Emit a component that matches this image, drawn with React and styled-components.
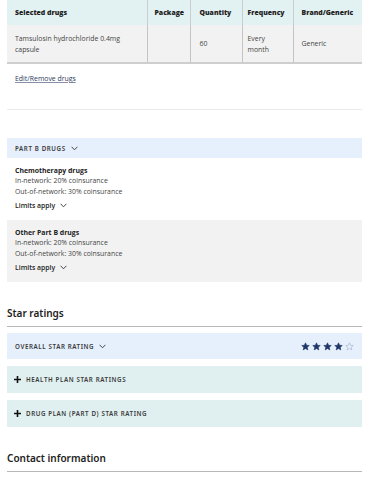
import React from 'react'
import styled, { createGlobalStyle } from 'styled-components'

const GlobalStyle = createGlobalStyle`
  body {
    margin: 0;
    background: #fff;
    font-family: "Open Sans", "Noto Sans", sans-serif;
    color: #222;
  }
`

const Page = styled.div`
  width: 370px;
  padding: 0 8px 0 7px;
  box-sizing: border-box;
`

const Table = styled.table`
  width: 355px;
  border-collapse: collapse;
  table-layout: fixed;
  border-bottom: 2px solid #cfcfcf;
`

const HeadCell = styled.th`
  background: #e2f1f1;
  height: 25px;
  padding: 0 0 0 ${p => p.$pad || 7}px;
  text-align: left;
  font-size: 6.9px;
  font-weight: 800;
  color: #222;
  border-left: ${p => (p.$first ? 'none' : '1px solid #c9cfcf')};
  box-sizing: border-box;
  white-space: nowrap;
`

const BodyCell = styled.td`
  background: #f2f2f2;
  height: 37px;
  padding: 0 4px 0 ${p => p.$pad || 7}px;
  font-size: 6.9px;
  line-height: 11px;
  color: #444;
  border-left: ${p => (p.$first ? 'none' : '1px solid #c4c4c4')};
  vertical-align: middle;
`

const EditLink = styled.a`
  display: block;
  margin: 10px 0 0 8px;
  font-size: 6.9px;
  line-height: 9px;
  color: #2d3a5a;
  text-decoration: underline;
  text-decoration-color: #8890a8;
`

const Divider = styled.div`
  height: 1px;
  background: #ececec;
  margin-top: 26px;
`

const Bar = styled.div`
  display: flex;
  align-items: center;
  justify-content: space-between;
  height: ${p => p.$h || 26}px;
  margin-top: ${p => p.$mt || 0}px;
  padding: 0 8px 0 ${p => p.$pl || 8}px;
  background: ${p => (p.$tone === 'teal' ? '#e0f0f0' : '#e6f0fd')};
`

const BarLabel = styled.span`
  display: flex;
  align-items: center;
  gap: 5px;
  font-family: "Noto Sans", sans-serif;
  font-size: 6.2px;
  font-weight: 600;
  letter-spacing: 0.6px;
  color: #3a3a3a;
  text-transform: uppercase;
`

const DrugBlock = styled.div`
  background: ${p => (p.$grey ? '#f2f2f2' : '#fff')};
  padding: 7px 8px 7px;
  height: 62px;
  box-sizing: border-box;
`

const DrugTitle = styled.div`
  font-size: 6.9px;
  font-weight: 700;
  color: #222;
  line-height: 11px;
`

const DrugLine = styled.div`
  font-size: 6.9px;
  color: #444;
  line-height: 10.5px;
`

const Limits = styled.div`
  display: flex;
  align-items: center;
  gap: 5px;
  margin-top: 4px;
  font-size: 6.9px;
  font-weight: 600;
  color: #222;
`

const Heading = styled.h2`
  margin: ${p => p.$mt}px 0 0;
  padding-bottom: 6px;
  border-bottom: 1px solid #b8b8b8;
  font-family: "Noto Sans", sans-serif;
  font-size: 10px;
  font-weight: 600;
  color: #222;
  line-height: 14px;
`

const Stars = styled.div`
  display: flex;
  gap: 2px;
`

const Chevron = () => (
  <svg width="7" height="5" viewBox="0 0 7 5">
    <path d="M0.6 0.8 L3.5 3.8 L6.4 0.8" fill="none" stroke="#333" strokeWidth="0.9" />
  </svg>
)

const Plus = () => (
  <svg width="7" height="7" viewBox="0 0 7 7">
    <path d="M3.5 0 V7 M0 3.5 H7" stroke="#111" strokeWidth="1.6" />
  </svg>
)

const Star = ({ filled }) => (
  <svg width="9" height="9" viewBox="0 0 24 24">
    <path
      d="M12 2.2l2.9 6.6 7.1.6-5.4 4.7 1.6 7-6.2-3.7-6.2 3.7 1.6-7L2 9.4l7.1-.6z"
      fill={filled ? '#1e3768' : 'none'}
      stroke={filled ? '#1e3768' : '#9fb0c8'}
      strokeWidth="1.6"
      strokeLinejoin="round"
    />
  </svg>
)

const drugs = [
  { title: 'Chemotherapy drugs', grey: false },
  { title: 'Other Part B drugs', grey: true },
]

export default function App() {
  return (
    <Page>
      <GlobalStyle />
      <Table>
        <colgroup>
          <col style={{ width: 140 }} />
          <col style={{ width: 43 }} />
          <col style={{ width: 52 }} />
          <col style={{ width: 51 }} />
          <col style={{ width: 69 }} />
        </colgroup>
        <thead>
          <tr>
            <HeadCell $first $pad={8}>Selected drugs</HeadCell>
            <HeadCell>Package</HeadCell>
            <HeadCell $pad={9}>Quantity</HeadCell>
            <HeadCell $pad={5}>Frequency</HeadCell>
            <HeadCell $pad={8}>Brand/Generic</HeadCell>
          </tr>
        </thead>
        <tbody>
          <tr>
            <BodyCell $first $pad={8}>Tamsulosin hydrochloride 0.4mg capsule</BodyCell>
            <BodyCell />
            <BodyCell $pad={9}>60</BodyCell>
            <BodyCell $pad={5}>Every<br />month</BodyCell>
            <BodyCell $pad={8}>Generic</BodyCell>
          </tr>
        </tbody>
      </Table>
      <EditLink href="#">Edit/Remove drugs</EditLink>
      <Divider />
      <Bar $h={20} $mt={28}>
        <BarLabel>Part B drugs <Chevron /></BarLabel>
      </Bar>
      {drugs.map(d => (
        <DrugBlock key={d.title} $grey={d.grey}>
          <DrugTitle>{d.title}</DrugTitle>
          <DrugLine>In-network: 20% coinsurance</DrugLine>
          <DrugLine>Out-of-network: 30% coinsurance</DrugLine>
          <Limits>Limits apply <Chevron /></Limits>
        </DrugBlock>
      ))}
      <Heading $mt={24}>Star ratings</Heading>
      <Bar $mt={6}>
        <BarLabel>Overall star rating <Chevron /></BarLabel>
        <Stars>
          {[1, 2, 3, 4, 5].map(i => <Star key={i} filled={i <= 4} />)}
        </Stars>
      </Bar>
      <Bar $mt={7} $h={27} $tone="teal" $pl={7}>
        <BarLabel><Plus />Health plan star ratings</BarLabel>
      </Bar>
      <Bar $mt={7} $h={27} $tone="teal" $pl={7}>
        <BarLabel><Plus />Drug plan (Part D) star rating</BarLabel>
      </Bar>
      <Heading $mt={24}>Contact information</Heading>
    </Page>
  )
}
